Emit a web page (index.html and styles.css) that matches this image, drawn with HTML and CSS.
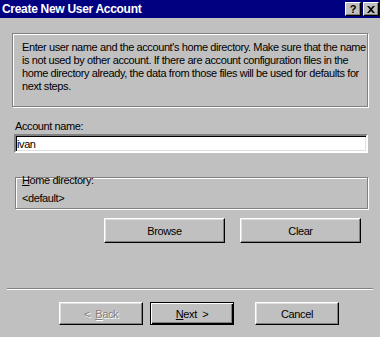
FILE: index.html
```html
<!DOCTYPE html>
<html lang="en">
<head>
  <meta charset="UTF-8" />
  <title>Create New User Account</title>
  <link rel="stylesheet" href="styles.css">
</head>
<body>

  <div class="titlebar">
    <span class="title">Create New User Account</span>
    <div class="title-buttons">
      <span class="tbtn">?</span>
      <span class="tbtn">
        <svg width="8" height="7" viewBox="0 0 8 7"><path d="M0 0h2l2 2 2-2h2L5 3.5 8 7H6L4 5 2 7H0l3-3.5z" fill="#000"/></svg>
      </span>
    </div>
  </div>

  <div class="content">
    <div class="info-box">
      Enter user name and the account's home directory. Make sure that the name<br>
      is not used by other account. If there are account configuration files in the<br>
      home directory already, the data from those files will be used for defaults for<br>
      next steps.
    </div>

    <div class="field-label">Account name:</div>
    <div class="text-input">ivan</div>

    <div class="group-box">
      <span class="legend"><u>H</u>ome directory:</span>
      <div class="group-value">&lt;default&gt;</div>
    </div>

    <div class="dir-buttons">
      <button class="btn btn-wide">Browse</button>
      <button class="btn btn-wide">Clear</button>
    </div>
  </div>

  <div class="separator"></div>

  <div class="wizard-buttons">
    <button class="btn btn-nav disabled">&lt;&nbsp; <u>B</u>ack</button>
    <button class="btn btn-nav default"><u>N</u>ext &nbsp;&gt;</button>
    <button class="btn btn-nav cancel">Cancel</button>
  </div>

</body>
</html>
```

FILE: styles.css
```css
body {
  margin: 0;
  width: 380px;
  height: 337px;
  overflow: hidden;
  background: #c0c0c0;
  font-family: 'Liberation Sans', Arial, sans-serif;
  font-size: 11px;
  letter-spacing: -0.4px;
  color: #000;
}

.titlebar {
  height: 18px;
  background: #000080;
  color: #fff;
  display: flex;
  align-items: center;
  justify-content: space-between;
  padding: 0 1px 0 2px;
}

.title {
  font-weight: bold;
  font-size: 12px;
  letter-spacing: -0.3px;
}

.title-buttons {
  display: flex;
  gap: 2px;
}

.tbtn {
  width: 14px;
  height: 12px;
  background: #c0c0c0;
  color: #000;
  font-weight: bold;
  font-size: 11px;
  line-height: 12px;
  text-align: center;
  display: flex;
  align-items: center;
  justify-content: center;
  border: 1px solid;
  border-color: #fff #000 #000 #fff;
  box-shadow: inset -1px -1px #808080;
}

.content {
  padding: 0 12px;
}

.info-box {
  margin-top: 15px;
  height: 74px;
  box-sizing: border-box;
  padding: 7px 9px;
  line-height: 13px;
  white-space: nowrap;
  border: 1px solid #808080;
  box-shadow: inset 1px 1px #fff, 1px 1px #fff;
}

.field-label {
  margin: 13px 0 0 3px;
  line-height: 13px;
}

.text-input {
  margin: 1px 0 0 2px;
  height: 19px;
  box-sizing: border-box;
  background: #fff;
  border: 2px solid;
  border-color: #808080 #fff #fff #808080;
  box-shadow: inset 1px 1px #000, inset -1px -1px #dfdfdf;
  padding: 2px 1px;
  line-height: 13px;
}

.group-box {
  margin: 24px 0 0 3px;
  height: 32px;
  box-sizing: border-box;
  border: 1px solid #808080;
  box-shadow: inset 1px 1px #fff, 1px 1px #fff;
  padding: 0 6px;
}

.legend {
  display: inline-block;
  margin-top: -4px;
  line-height: 12px;
  vertical-align: top;
}

.group-value {
  margin-top: 2px;
  line-height: 13px;
}

.dir-buttons {
  display: flex;
  gap: 15px;
  margin: 9px 0 0 92px;
}

.btn {
  background: #c0c0c0;
  font-family: inherit;
  font-size: 11px;
  letter-spacing: -0.4px;
  color: #000;
  padding: 0;
  border: 1px solid;
  border-color: #fff #000 #000 #fff;
  box-shadow: inset -1px -1px #808080, inset 1px 1px #dfdfdf;
}

.btn-wide {
  width: 121px;
  height: 25px;
}

.separator {
  margin: 45px 7px 0 7px;
  border-top: 1px solid #808080;
  border-bottom: 1px solid #fff;
}

.wizard-buttons {
  display: flex;
  margin: 12px 0 0 59px;
}

.btn-nav {
  width: 84px;
  height: 23px;
}

.btn-nav.default {
  margin-left: 7px;
  border: 1px solid #000;
  box-shadow: inset 1px 1px #fff, inset -1px -1px #000, inset -2px -2px #808080;
}

.btn-nav.cancel {
  margin-left: 21px;
}

.disabled {
  color: #808080;
  text-shadow: 1px 1px #fff;
}
```
